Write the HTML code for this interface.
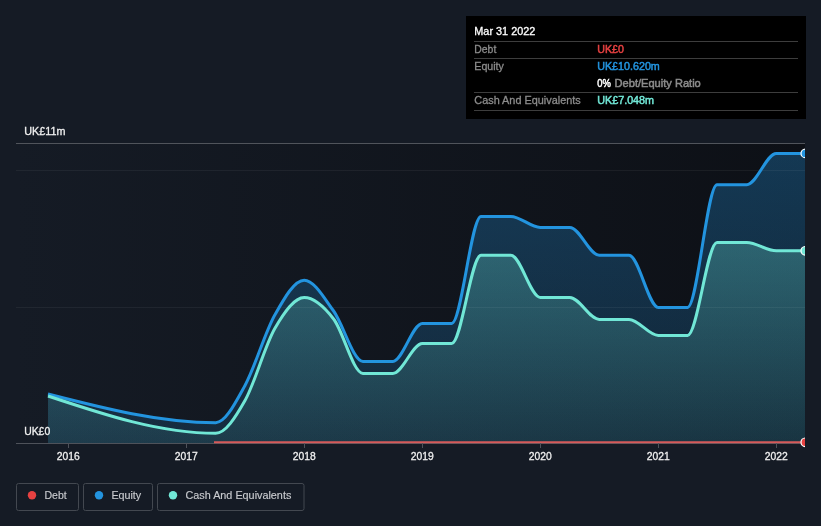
<!DOCTYPE html>
<html><head><meta charset="utf-8">
<style>
html,body{margin:0;padding:0;width:821px;height:526px;overflow:hidden;background:#151b25;}
body{position:relative;font-family:"Liberation Sans",sans-serif;}
svg{position:absolute;left:0;top:0;will-change:transform;}
text{font-family:"Liberation Sans",sans-serif;font-size:11px;}
.m{stroke-width:0.3px;}
.b{stroke-width:0.5px;}
</style></head><body>
<svg width="821" height="526" viewBox="0 0 821 526">
<defs>
<linearGradient id="bgg" x1="0" y1="0" x2="1" y2="0">
<stop offset="0" stop-color="#151b25"/>
<stop offset="1" stop-color="#0d1016"/>
</linearGradient>
<linearGradient id="eqg" x1="0" y1="143" x2="0" y2="443" gradientUnits="userSpaceOnUse">
<stop offset="0" stop-color="#2394df" stop-opacity="0.31"/>
<stop offset="1" stop-color="#2394df" stop-opacity="0.145"/>
</linearGradient>
<linearGradient id="cag" x1="0" y1="143" x2="0" y2="443" gradientUnits="userSpaceOnUse">
<stop offset="0" stop-color="#71e7d6" stop-opacity="0.37"/>
<stop offset="1" stop-color="#71e7d6" stop-opacity="0.085"/>
</linearGradient>
<clipPath id="clip"><rect x="16" y="0" width="789" height="526"/></clipPath>
</defs>
<rect x="16" y="143" width="789" height="300" fill="url(#bgg)"/>
<g clip-path="url(#clip)">
<path d="M48.00,394.00C103.90,408.35,159.80,422.70,215.70,422.70C225.47,422.70,235.23,403.21,245.00,385.50C254.93,367.49,264.87,332.59,274.80,315.00C284.60,297.65,294.40,280.20,304.20,280.20C314.00,280.20,323.80,297.47,333.60,311.00C343.40,324.53,353.20,361.40,363.00,361.40C372.93,361.40,382.87,361.40,392.80,361.40C402.63,361.40,412.47,323.40,422.30,323.40C432.10,323.40,441.90,323.40,451.70,323.40C461.47,323.40,471.23,216.40,481.00,216.40C490.93,216.40,500.87,216.40,510.80,216.40C520.63,216.40,530.47,227.40,540.30,227.40C550.13,227.40,559.97,227.40,569.80,227.40C579.63,227.40,589.47,255.30,599.30,255.30C609.20,255.30,619.10,255.30,629.00,255.30C638.77,255.30,648.53,307.40,658.30,307.40C668.07,307.40,677.83,307.40,687.60,307.40C697.40,307.40,707.20,184.70,717.00,184.70C726.93,184.70,736.87,184.70,746.80,184.70C756.63,184.70,766.47,153.40,776.30,153.40C786.07,153.40,795.83,153.40,805.60,153.40L805.60,443 L48.00,443 Z" fill="url(#eqg)"/>
<path d="M48.00,396.00C103.90,414.65,159.80,433.30,215.70,433.30C225.47,433.30,235.23,417.71,245.00,400.50C254.93,382.99,264.87,345.67,274.80,328.50C284.60,311.56,294.40,297.60,304.20,297.60C314.00,297.60,323.80,306.37,333.60,319.00C343.40,331.63,353.20,373.40,363.00,373.40C372.93,373.40,382.87,373.40,392.80,373.40C402.63,373.40,412.47,343.50,422.30,343.50C432.10,343.50,441.90,343.50,451.70,343.50C461.47,343.50,471.23,255.20,481.00,255.20C490.93,255.20,500.87,255.20,510.80,255.20C520.63,255.20,530.47,297.40,540.30,297.40C550.13,297.40,559.97,297.40,569.80,297.40C579.63,297.40,589.47,319.40,599.30,319.40C609.20,319.40,619.10,319.40,629.00,319.40C638.77,319.40,648.53,335.40,658.30,335.40C668.07,335.40,677.83,335.40,687.60,335.40C697.40,335.40,707.20,242.50,717.00,242.50C726.93,242.50,736.87,242.50,746.80,242.50C756.63,242.50,766.47,250.80,776.30,250.80C786.07,250.80,795.83,250.80,805.60,250.80L805.60,443 L48.00,443 Z" fill="url(#cag)"/>
<line x1="16" y1="170.5" x2="805.3" y2="170.5" stroke="#ffffff" stroke-opacity="0.055" stroke-width="1"/>
<line x1="16" y1="307.5" x2="805.3" y2="307.5" stroke="#ffffff" stroke-opacity="0.055" stroke-width="1"/>
<line x1="16" y1="143.5" x2="805.3" y2="143.5" stroke="#50545b" stroke-width="1"/>
<line x1="16" y1="443.5" x2="805.3" y2="443.5" stroke="#4e525a" stroke-width="1"/>
<path d="M48.00,394.00C103.90,408.35,159.80,422.70,215.70,422.70C225.47,422.70,235.23,403.21,245.00,385.50C254.93,367.49,264.87,332.59,274.80,315.00C284.60,297.65,294.40,280.20,304.20,280.20C314.00,280.20,323.80,297.47,333.60,311.00C343.40,324.53,353.20,361.40,363.00,361.40C372.93,361.40,382.87,361.40,392.80,361.40C402.63,361.40,412.47,323.40,422.30,323.40C432.10,323.40,441.90,323.40,451.70,323.40C461.47,323.40,471.23,216.40,481.00,216.40C490.93,216.40,500.87,216.40,510.80,216.40C520.63,216.40,530.47,227.40,540.30,227.40C550.13,227.40,559.97,227.40,569.80,227.40C579.63,227.40,589.47,255.30,599.30,255.30C609.20,255.30,619.10,255.30,629.00,255.30C638.77,255.30,648.53,307.40,658.30,307.40C668.07,307.40,677.83,307.40,687.60,307.40C697.40,307.40,707.20,184.70,717.00,184.70C726.93,184.70,736.87,184.70,746.80,184.70C756.63,184.70,766.47,153.40,776.30,153.40C786.07,153.40,795.83,153.40,805.60,153.40" fill="none" stroke="#2394df" stroke-width="3"/>
<path d="M48.00,396.00C103.90,414.65,159.80,433.30,215.70,433.30C225.47,433.30,235.23,417.71,245.00,400.50C254.93,382.99,264.87,345.67,274.80,328.50C284.60,311.56,294.40,297.60,304.20,297.60C314.00,297.60,323.80,306.37,333.60,319.00C343.40,331.63,353.20,373.40,363.00,373.40C372.93,373.40,382.87,373.40,392.80,373.40C402.63,373.40,412.47,343.50,422.30,343.50C432.10,343.50,441.90,343.50,451.70,343.50C461.47,343.50,471.23,255.20,481.00,255.20C490.93,255.20,500.87,255.20,510.80,255.20C520.63,255.20,530.47,297.40,540.30,297.40C550.13,297.40,559.97,297.40,569.80,297.40C579.63,297.40,589.47,319.40,599.30,319.40C609.20,319.40,619.10,319.40,629.00,319.40C638.77,319.40,648.53,335.40,658.30,335.40C668.07,335.40,677.83,335.40,687.60,335.40C697.40,335.40,707.20,242.50,717.00,242.50C726.93,242.50,736.87,242.50,746.80,242.50C756.63,242.50,766.47,250.80,776.30,250.80C786.07,250.80,795.83,250.80,805.60,250.80" fill="none" stroke="#71e7d6" stroke-width="3"/>
<line x1="214" y1="442.3" x2="805.6" y2="442.3" stroke="#d65a5a" stroke-width="2"/>
<circle cx="805.3" cy="153.4" r="4.3" fill="#2394df" stroke="#ffffff" stroke-width="1.2"/>
<circle cx="805.3" cy="250.8" r="4.3" fill="#71e7d6" stroke="#ffffff" stroke-width="1.2"/>
<circle cx="805.3" cy="442.3" r="4.3" fill="#e64141" stroke="#ffffff" stroke-width="1.2"/>
</g>
<g stroke="#4e525a" stroke-width="1"><line x1="68.5" y1="443" x2="68.5" y2="448" /><line x1="186.5" y1="443" x2="186.5" y2="448" /><line x1="304.5" y1="443" x2="304.5" y2="448" /><line x1="422.5" y1="443" x2="422.5" y2="448" /><line x1="540.5" y1="443" x2="540.5" y2="448" /><line x1="658.5" y1="443" x2="658.5" y2="448" /><line x1="776.5" y1="443" x2="776.5" y2="448" /></g>
<g fill="#f0f0f0" stroke="#f0f0f0" class="m"><text x="56.7" y="460" textLength="23" lengthAdjust="spacingAndGlyphs">2016</text><text x="174.7" y="460" textLength="23" lengthAdjust="spacingAndGlyphs">2017</text><text x="292.7" y="460" textLength="23" lengthAdjust="spacingAndGlyphs">2018</text><text x="410.7" y="460" textLength="23" lengthAdjust="spacingAndGlyphs">2019</text><text x="528.7" y="460" textLength="23" lengthAdjust="spacingAndGlyphs">2020</text><text x="646.7" y="460" textLength="23" lengthAdjust="spacingAndGlyphs">2021</text><text x="764.7" y="460" textLength="23" lengthAdjust="spacingAndGlyphs">2022</text></g>
<g fill="#f0f0f0" stroke="#f0f0f0" class="m">
<text x="24.2" y="134.8" textLength="41.2" lengthAdjust="spacingAndGlyphs">UK£11m</text>
<text x="24.2" y="434.5" textLength="26" lengthAdjust="spacingAndGlyphs">UK£0</text>
</g>
<rect x="466" y="16" width="340" height="103" fill="#000"/>
<g fill="#3d3d3d">
<rect x="474" y="41" width="324" height="1"/>
<rect x="474" y="58" width="324" height="1"/>
<rect x="474" y="92" width="324" height="1"/>
<rect x="474" y="110" width="324" height="1"/>
</g>
<text x="474.3" y="35.2" fill="#ffffff" stroke="#ffffff" class="m" textLength="61" lengthAdjust="spacingAndGlyphs">Mar 31 2022</text>
<g fill="#8c8c8c" stroke="#8c8c8c" class="m">
<text x="474.3" y="52.7" textLength="22" lengthAdjust="spacingAndGlyphs">Debt</text>
<text x="474.3" y="69.5" textLength="29.6" lengthAdjust="spacingAndGlyphs">Equity</text>
<text x="474.3" y="103.8" textLength="106.4" lengthAdjust="spacingAndGlyphs">Cash And Equivalents</text>
<text x="597.2" y="87.0" fill="#fff" stroke="#fff" class="b" textLength="13.6" lengthAdjust="spacingAndGlyphs">0%</text><text x="614.6" y="87.0" class="b" textLength="86.2" lengthAdjust="spacingAndGlyphs">Debt/Equity Ratio</text>
</g>
<text x="597.2" y="52.7" fill="#e64141" stroke="#e64141" class="b" textLength="26.7" lengthAdjust="spacingAndGlyphs">UK£0</text>
<text x="597.2" y="69.5" fill="#2394df" stroke="#2394df" class="b" textLength="62.6" lengthAdjust="spacingAndGlyphs">UK£10.620m</text>
<text x="597.2" y="103.8" fill="#71e7d6" stroke="#71e7d6" class="b" textLength="56.9" lengthAdjust="spacingAndGlyphs">UK£7.048m</text>
<g fill="none" stroke="#434850" stroke-width="1">
<rect x="16.5" y="483.5" width="62" height="27" rx="2"/>
<rect x="83.5" y="483.5" width="69" height="27" rx="2"/>
<rect x="157.5" y="483.5" width="146.5" height="27" rx="2"/>
</g>
<circle cx="32" cy="495.2" r="4.2" fill="#e64141"/>
<circle cx="99" cy="495.2" r="4.2" fill="#2394df"/>
<circle cx="173" cy="495.2" r="4.2" fill="#71e7d6"/>
<g fill="#c9cbcf" stroke="#c9cbcf" style="stroke-width:0.15px">
<text x="44.4" y="499.1" textLength="22.3" lengthAdjust="spacingAndGlyphs">Debt</text>
<text x="111.4" y="499.1" textLength="29.8" lengthAdjust="spacingAndGlyphs">Equity</text>
<text x="185.5" y="499.1" textLength="105.8" lengthAdjust="spacingAndGlyphs">Cash And Equivalents</text>
</g>
</svg>
</body></html>
